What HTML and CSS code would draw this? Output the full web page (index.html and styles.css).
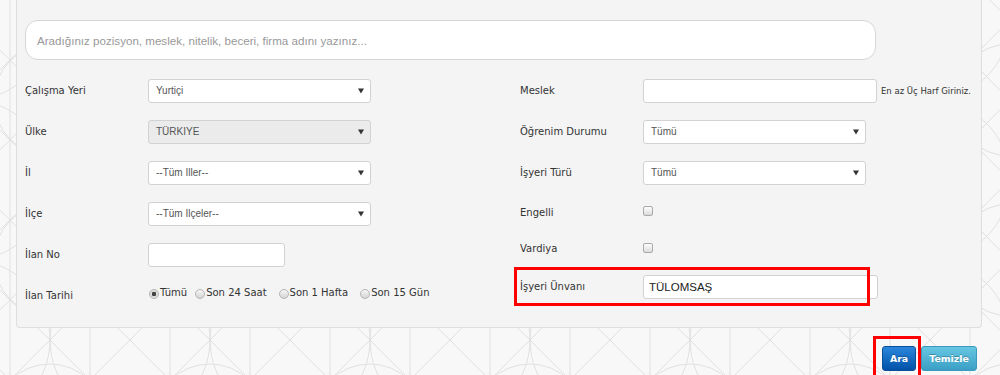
FILE: index.html
```html
<!DOCTYPE html>
<html lang="tr">

<head>
    <meta charset="UTF-8">
    <meta name="viewport" content="width=device-width, initial-scale=1.0">
    <title>İş Ara</title>
    <link rel="stylesheet" href="styles.css">
</head>

<body>
    <div class="panel">
        <input type="text" class="search" placeholder="Aradığınız pozisyon, meslek, nitelik, beceri, firma adını yazınız..." />
        <div class="form">
            <div class="col">
                <div class="row">
                    <label class="lbl">Çalışma Yeri</label>
                    <select class="sel"><option>Yurtiçi</option></select>
                </div>
                <div class="row">
                    <label class="lbl">Ülke</label>
                    <select class="sel" disabled><option>TÜRKİYE</option></select>
                </div>
                <div class="row">
                    <label class="lbl">İl</label>
                    <select class="sel"><option>--Tüm İller--</option></select>
                </div>
                <div class="row">
                    <label class="lbl">İlçe</label>
                    <select class="sel"><option>--Tüm İlçeler--</option></select>
                </div>
                <div class="row">
                    <label class="lbl">İlan No</label>
                    <input type="text" class="txt txt-short" />
                </div>
                <div class="row">
                    <label class="lbl">İlan Tarihi</label>
                    <div class="radios">
                        <label class="opt"><input type="radio" name="tarih" class="rad" checked />Tümü</label>
                        <label class="opt"><input type="radio" name="tarih" class="rad" />Son 24 Saat</label>
                        <label class="opt"><input type="radio" name="tarih" class="rad" />Son 1 Hafta</label>
                        <label class="opt"><input type="radio" name="tarih" class="rad" />Son 15 Gün</label>
                    </div>
                </div>
            </div>
            <div class="col">
                <div class="row">
                    <label class="lbl">Meslek</label>
                    <input type="text" class="txt txt-wide" />
                    <span class="hint">En az Üç Harf Giriniz.</span>
                </div>
                <div class="row">
                    <label class="lbl">Öğrenim Durumu</label>
                    <select class="sel"><option>Tümü</option></select>
                </div>
                <div class="row">
                    <label class="lbl">İşyeri Türü</label>
                    <select class="sel"><option>Tümü</option></select>
                </div>
                <div class="row row-check">
                    <label class="lbl">Engelli</label>
                    <input type="checkbox" class="chk" />
                </div>
                <div class="row row-check2">
                    <label class="lbl">Vardiya</label>
                    <input type="checkbox" class="chk" />
                </div>
                <div class="row row-marked">
                    <label class="lbl">İşyeri Ünvanı</label>
                    <input type="text" class="txt txt-wide txt-big" value="TÜLOMSAŞ" />
                    <span class="mark mark-row"></span>
                </div>
            </div>
        </div>
    </div>

    <div class="actions">
        <span class="btn-wrap">
            <button class="btn btn-ara">Ara</button>
            <span class="mark mark-btn"></span>
        </span>
        <button class="btn btn-temizle">Temizle</button>
    </div>
</body>

</html>
```

FILE: styles.css
```css
* {
    box-sizing: border-box;
}

body {
    margin: 0;
    height: 375px;
    overflow: hidden;
    font-family: "DejaVu Sans", Verdana, sans-serif;
    font-size: 10px;
    color: #333;
    background-color: #f8f8f8;
    background-image: url("data:image/svg+xml;utf8,<svg xmlns='http://www.w3.org/2000/svg' width='160' height='160' fill='none' stroke='%23e0e0e0' stroke-width='1'><circle cx='0' cy='0' r='80'/><circle cx='160' cy='0' r='80'/><circle cx='0' cy='160' r='80'/><circle cx='160' cy='160' r='80'/><circle cx='80' cy='80' r='56'/><path d='M0 0L160 160M160 0L0 160M80 0L0 80M80 0L160 80M0 80L80 160M160 80L80 160M40 0L40 160M120 0L120 160'/></svg>");
    background-position: -30px 20px;
}

.panel {
    margin-left: 16px;
    width: 966px;
    background-color: #f4f4f4;
    border: 1px solid #dedede;
    border-top: none;
    border-radius: 0 0 4px 4px;
    padding: 20px 8px 11px;
}

.search {
    display: block;
    width: 851px;
    height: 40px;
    border: 1px solid #d6d6d6;
    border-radius: 13px;
    background: #fff;
    padding: 0 11px;
    font-family: "Liberation Sans", Arial, sans-serif;
    font-size: 11.6px;
    color: #555;
    outline: none;
}

.search::placeholder {
    color: #999;
}

.form {
    display: grid;
    grid-template-columns: 495px 1fr;
    margin-top: 10px;
}

.row {
    display: flex;
    align-items: center;
    height: 41px;
}

.row-check {
    height: 38px;
}

.row-check2 {
    height: 35px;
}

.row-marked {
    position: relative;
}

.lbl {
    width: 123px;
    flex-shrink: 0;
    color: #333;
}

.sel {
    -webkit-appearance: none;
    appearance: none;
    width: 223px;
    height: 24px;
    border: 1px solid #d2d2d2;
    border-radius: 3px;
    background: #fff url("data:image/svg+xml;utf8,<svg xmlns='http://www.w3.org/2000/svg' width='6' height='6'><path d='M0 0.5H6L3 5.5Z' fill='%23333'/></svg>") no-repeat right 6px center;
    padding: 0 16px 0 7px;
    font-family: "Liberation Sans", Arial, sans-serif;
    font-size: 10px;
    color: #555;
    outline: none;
}

.sel:disabled {
    background-color: #ebebeb;
    color: #555;
    opacity: 1;
}

.txt {
    height: 24px;
    border: 1px solid #d2d2d2;
    border-radius: 3px;
    background: #fff;
    padding: 0 6px;
    font-family: "Liberation Sans", Arial, sans-serif;
    font-size: 10px;
    color: #333;
    outline: none;
}

.txt-short {
    width: 137px;
}

.txt-wide {
    width: 234px;
}

.txt-big {
    width: 235px;
    font-size: 11.5px;
    color: #222;
    padding: 0 5px;
}

.hint {
    margin-left: 4px;
    font-size: 8.5px;
    color: #333;
    white-space: nowrap;
}

.chk {
    -webkit-appearance: none;
    appearance: none;
    width: 10px;
    height: 10px;
    margin: 0;
    position: relative;
    top: -1px;
    border: 1px solid #aaa;
    border-radius: 2px;
    background: linear-gradient(#fdfdfd, #dcdcdc);
}

.radios {
    display: flex;
    align-items: center;
    margin-top: -6px;
}

.opt {
    display: flex;
    align-items: center;
    margin-right: 11px;
    color: #333;
}

.opt:first-child {
    margin-right: 7px;
}

.rad {
    -webkit-appearance: none;
    appearance: none;
    width: 10px;
    height: 10px;
    margin: 3px 1px 0 1px;
    border: 1px solid #b4b4b4;
    border-radius: 50%;
    background: linear-gradient(#f6f6f6, #d4d4d4);
}

.rad:checked {
    background: radial-gradient(circle, #444 0 2px, #dcdcdc 2.5px);
}

.mark {
    position: absolute;
    border: 3px solid #f00;
    pointer-events: none;
}

.mark-row {
    left: -6px;
    top: 1px;
    width: 356px;
    height: 39px;
}

.mark-btn {
    left: -9px;
    top: -10px;
    width: 48px;
    height: 45px;
}

.actions {
    display: flex;
    justify-content: flex-end;
    gap: 5px;
    margin: 18px 23px 0 0;
}

.btn-wrap {
    position: relative;
    display: flex;
}

.btn {
    height: 25px;
    border-radius: 3px;
    font-family: "DejaVu Sans", Verdana, sans-serif;
    font-weight: bold;
    font-size: 9.4px;
    color: #fff;
    text-shadow: 0 -1px 0 rgba(0, 0, 0, 0.25);
    cursor: pointer;
    padding: 0;
}

.btn-ara {
    width: 34px;
    border: 1px solid #0b4f9a;
    background: linear-gradient(#2a87dd, #0052a8);
}

.btn-temizle {
    width: 56px;
    border: 1px solid #3a9abd;
    background: linear-gradient(#66c6e2, #3b9fc5);
}
```
